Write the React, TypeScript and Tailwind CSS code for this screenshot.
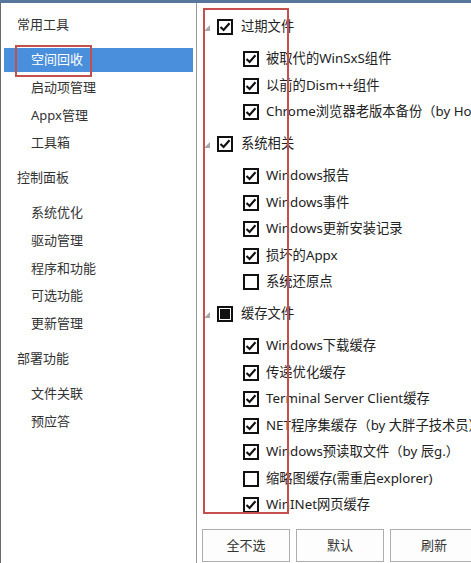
import React from "react";

type Item = { label: string; checked: boolean };
type Group = { title: string; state: "checked" | "partial"; items: Item[] };

const font = {
  fontFamily: '"Noto Sans", "Noto Sans CJK SC", sans-serif',
};

const navGroups = [
  { title: "常用工具", items: ["空间回收", "启动项管理", "Appx管理", "工具箱"] },
  { title: "控制面板", items: ["系统优化", "驱动管理", "程序和功能", "可选功能", "更新管理"] },
  { title: "部署功能", items: ["文件关联", "预应答"] },
];

const groups: Group[] = [
  {
    title: "过期文件",
    state: "checked",
    items: [
      { label: "被取代的WinSxS组件", checked: true },
      { label: "以前的Dism++组件", checked: true },
      { label: "Chrome浏览器老版本备份（by Houtar）", checked: true },
    ],
  },
  {
    title: "系统相关",
    state: "checked",
    items: [
      { label: "Windows报告", checked: true },
      { label: "Windows事件", checked: true },
      { label: "Windows更新安装记录", checked: true },
      { label: "损坏的Appx", checked: true },
      { label: "系统还原点", checked: false },
    ],
  },
  {
    title: "缓存文件",
    state: "partial",
    items: [
      { label: "Windows下载缓存", checked: true },
      { label: "传递优化缓存", checked: true },
      { label: "Terminal Server Client缓存", checked: true },
      { label: "NET程序集缓存（by 大胖子技术员）", checked: true },
      { label: "Windows预读取文件（by 辰g.）", checked: true },
      { label: "缩略图缓存(需重启explorer)", checked: false },
      { label: "WinINet网页缓存", checked: true },
    ],
  },
];

function Box({ state }: { state: "checked" | "partial" | "empty" }) {
  return (
    <div className="w-[16px] h-[16px] border-2 border-[#111] bg-white flex items-center justify-center shrink-0">
      {state === "checked" && (
        <svg width="12" height="12" viewBox="0 0 12 12">
          <path d="M1.5 6 L4.6 9 L10.5 2.2" fill="none" stroke="#111" strokeWidth="2.2" />
        </svg>
      )}
      {state === "partial" && <div className="w-[10px] h-[10px] bg-[#111]" />}
    </div>
  );
}

export default function App() {
  return (
    <div className="w-[471px] h-[563px] bg-white overflow-hidden relative text-[13px]" style={font}>
      <div className="h-[3px] bg-[#56779b]" />
      <div className="flex h-[560px]">
        {/* left nav */}
        <div className="w-[197px] shrink-0 border-l border-r border-l-[#6a6a6a] border-r-[#9a9a9a] pt-[8px] text-[#333]">
          {navGroups.map((g, gi) => (
            <div key={g.title} className={gi > 0 ? "mt-[7px]" : ""}>
              <div className="h-[28px] flex items-center pl-[16px] mb-[7px]">{g.title}</div>
              {g.items.map((it) => (
                <div key={it} className="h-[27.75px] flex items-center px-[3px]">
                  <div
                    className={`h-[24px] w-full flex items-center pl-[27px] ${
                      it === "空间回收" ? "bg-[#4a8fdc] text-white" : ""
                    }`}
                  >
                    {it}
                  </div>
                </div>
              ))}
            </div>
          ))}
        </div>

        {/* right panel */}
        <div className="flex-1 flex flex-col min-w-0">
          <div className="h-[510px] overflow-hidden pt-[11px] text-[#222] text-[13.3px] whitespace-nowrap">
            {groups.map((g, gi) => (
              <div key={g.title} className={gi > 0 ? "mt-[5.5px]" : ""}>
                <div className="h-[26px] flex items-center">
                  <svg width="6" height="6" viewBox="0 0 6 6" className="ml-[7px] mr-[7px] mt-[2px]">
                    <polygon points="6,0 6,6 0,6" fill="#a8a8a8" />
                  </svg>
                  <Box state={g.state} />
                  <span className="ml-[8px]">{g.title}</span>
                </div>
                <div className="mt-[6px]">
                  {g.items.map((it) => (
                    <div key={it.label} className="h-[26.5px] flex items-center pl-[46px]">
                      <Box state={it.checked ? "checked" : "empty"} />
                      <span className="ml-[7px]">{it.label}</span>
                    </div>
                  ))}
                </div>
              </div>
            ))}
          </div>
          <div className="flex gap-[6px] pl-[5px] mt-[16px] text-[#333]">
            {["全不选", "默认", "刷新"].map((b) => (
              <div
                key={b}
                className="w-[88px] h-[33px] shrink-0 border border-[#adadad] bg-[#fdfdfd] flex items-center justify-center"
              >
                {b}
              </div>
            ))}
          </div>
        </div>
      </div>

      {/* annotation boxes */}
      <div className="absolute left-[15px] top-[45px] w-[77px] h-[32px] border-2 border-[#c4504e]" />
      <div className="absolute left-[203px] top-[8px] w-[86px] h-[506px] border-2 border-[#c4504e]" />
    </div>
  );
}
